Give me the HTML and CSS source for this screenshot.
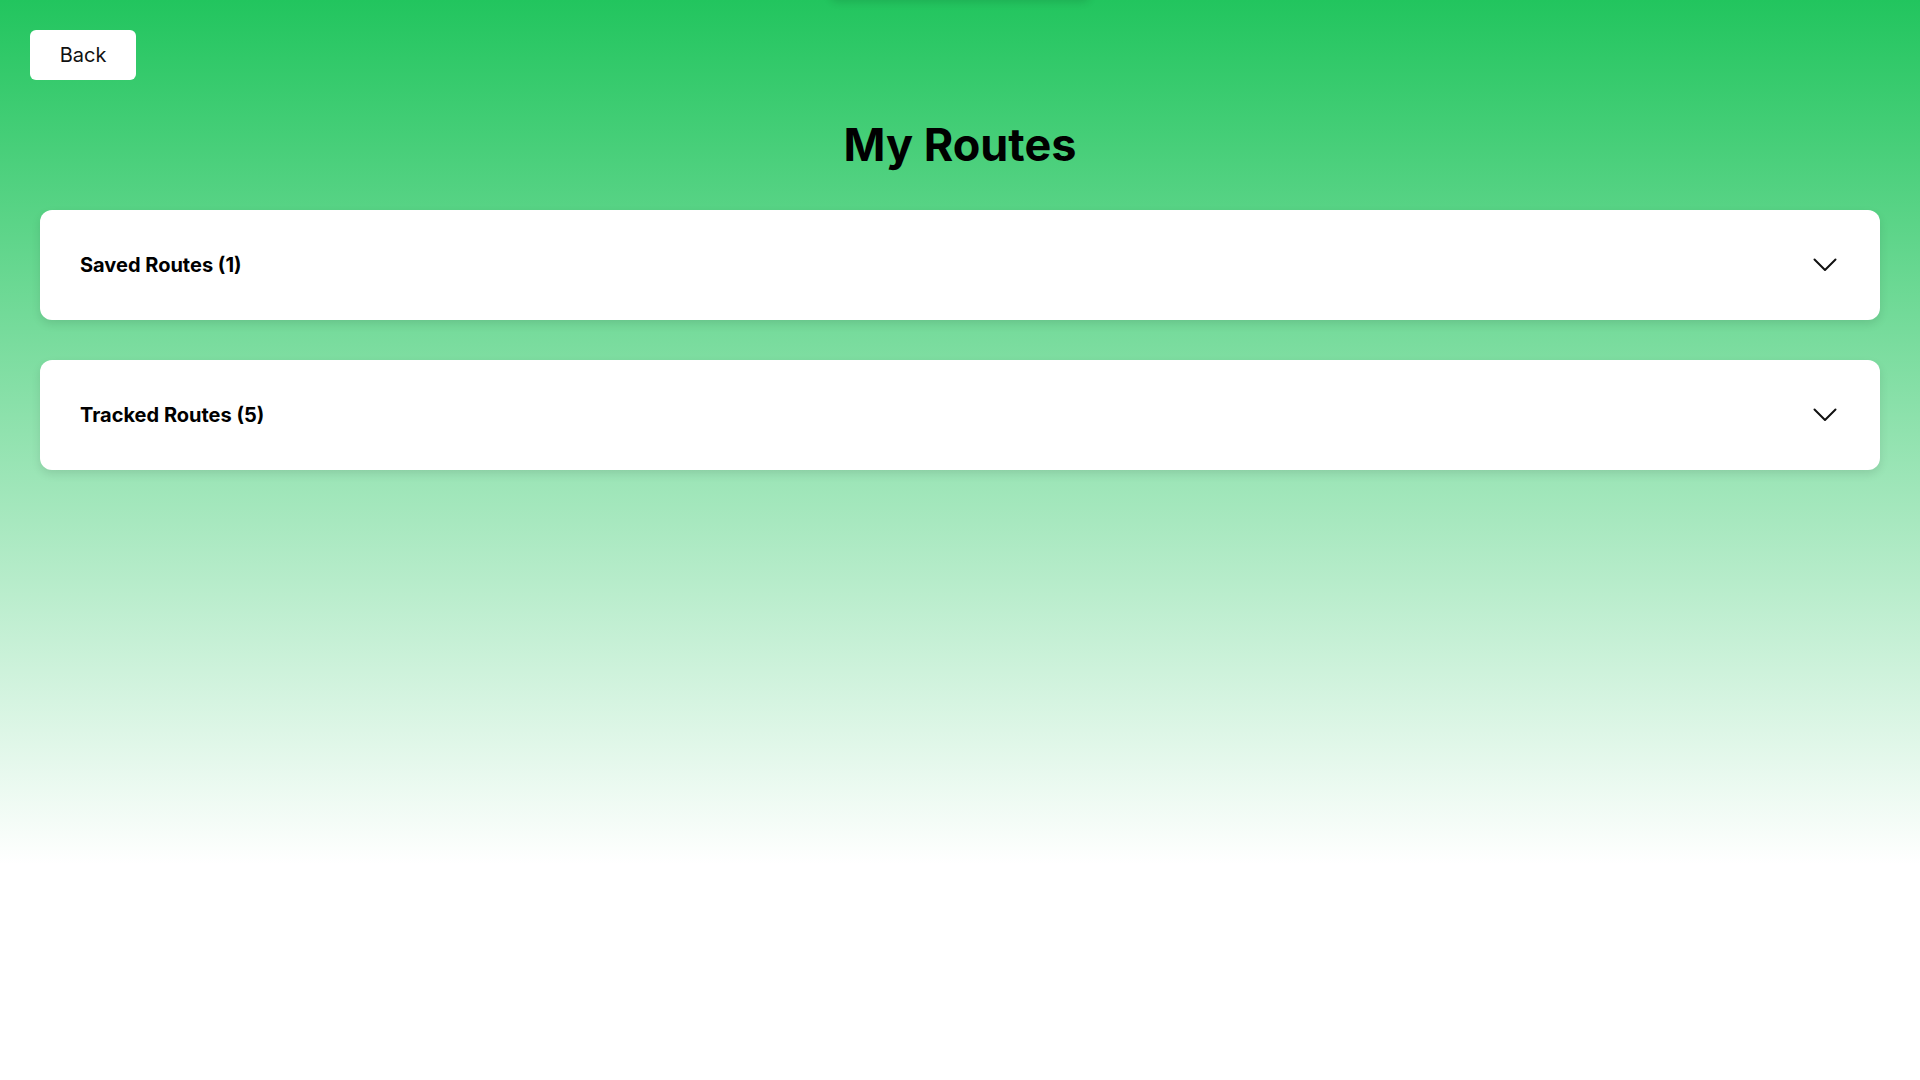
FILE: index.html
```html
<!DOCTYPE html>
<html lang="en">
<head>
<meta charset="utf-8">
<title>My Routes</title>
<link rel="stylesheet" href="styles.css">
</head>
<body>
<div class="top-shadow"></div>
<div class="page">
  <div class="toolbar">
    <button class="back-btn">Back</button>
  </div>
  <h1 class="title">My Routes</h1>
  <div class="sections">
    <div class="card">
      <span class="card-label">Saved Routes (1)</span>
      <svg class="chevron" width="24" height="14" viewBox="0 0 24 14" fill="none" stroke="#111" stroke-width="2" stroke-linecap="round" stroke-linejoin="round"><polyline points="1.5,1.5 12,12 22.5,1.5"/></svg>
    </div>
    <div class="card">
      <span class="card-label">Tracked Routes (5)</span>
      <svg class="chevron" width="24" height="14" viewBox="0 0 24 14" fill="none" stroke="#111" stroke-width="2" stroke-linecap="round" stroke-linejoin="round"><polyline points="1.5,1.5 12,12 22.5,1.5"/></svg>
    </div>
  </div>
</div>
</body>
</html>
```

FILE: styles.css
```css
* { box-sizing: border-box; }
html, body { margin: 0; padding: 0; }
body {
  min-height: 1080px;
  font-family: Inter, "Noto Sans", "Liberation Sans", sans-serif;
  background: linear-gradient(to bottom, #22c55e 0px, #ffffff 864px, #ffffff 100%);
  background-repeat: no-repeat;
  color: #000;
}
.top-shadow {
  position: absolute;
  left: 830px;
  top: -40px;
  width: 260px;
  height: 40px;
  border-radius: 8px;
  box-shadow: 0 2px 8px rgba(0, 0, 0, 0.12);
}
.page {
  padding: 30px 40px 0 40px;
}
.toolbar {
  display: flex;
  margin-left: -10px;
}
.back-btn {
  background: #fff;
  border: none;
  border-radius: 6px;
  width: 106px;
  height: 50px;
  font-family: Inter, "Noto Sans", sans-serif;
  font-size: 20px;
  color: #111;
  padding: 0;
  cursor: pointer;
}
.title {
  margin: 38px 0 0 0;
  text-align: center;
  font-size: 45px;
  font-weight: 700;
  line-height: 54px;
  height: 58px;
}
.sections {
  margin-top: 34px;
  display: flex;
  flex-direction: column;
  gap: 40px;
}
.card {
  background: #fff;
  border-radius: 12px;
  height: 110px;
  padding: 0 43px 0 40px;
  display: flex;
  align-items: center;
  justify-content: space-between;
  box-shadow: 0 4px 10px rgba(0, 0, 0, 0.1);
}
.card-label {
  font-size: 20px;
  font-weight: 650;
  color: #000;
}
.chevron { display: block; }
```
